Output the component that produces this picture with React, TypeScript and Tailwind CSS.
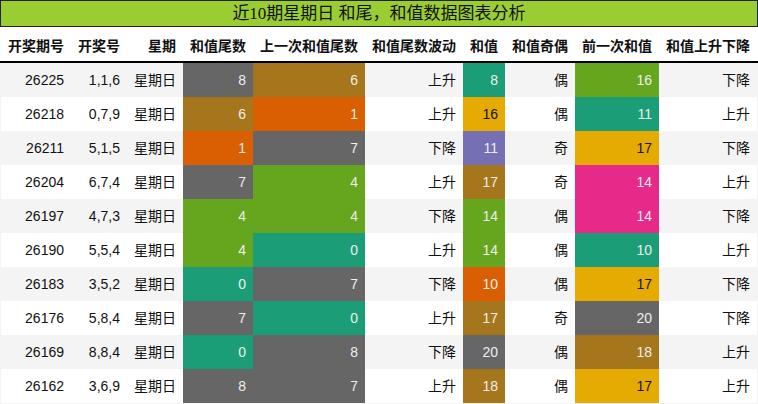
import React from "react";

type Cell = { v: string; c: string };

const G = "#666666";
const B = "#a6761d";
const O = "#d95f02";
const T = "#1b9e77";
const GR = "#66a61e";
const P = "#7570b3";
const Y = "#e6ab02";
const PK = "#e7298a";

const rows: [string, string, Cell, Cell, string, Cell, string, Cell, string][] = [
  ["26225", "1,1,6", { v: "8", c: G }, { v: "6", c: B }, "上升", { v: "8", c: T }, "偶", { v: "16", c: GR }, "下降"],
  ["26218", "0,7,9", { v: "6", c: B }, { v: "1", c: O }, "上升", { v: "16", c: Y }, "偶", { v: "11", c: T }, "上升"],
  ["26211", "5,1,5", { v: "1", c: O }, { v: "7", c: G }, "下降", { v: "11", c: P }, "奇", { v: "17", c: Y }, "下降"],
  ["26204", "6,7,4", { v: "7", c: G }, { v: "4", c: GR }, "上升", { v: "17", c: B }, "奇", { v: "14", c: PK }, "上升"],
  ["26197", "4,7,3", { v: "4", c: GR }, { v: "4", c: GR }, "下降", { v: "14", c: GR }, "偶", { v: "14", c: PK }, "下降"],
  ["26190", "5,5,4", { v: "4", c: GR }, { v: "0", c: T }, "上升", { v: "14", c: GR }, "偶", { v: "10", c: T }, "上升"],
  ["26183", "3,5,2", { v: "0", c: T }, { v: "7", c: G }, "下降", { v: "10", c: O }, "偶", { v: "17", c: Y }, "下降"],
  ["26176", "5,8,4", { v: "7", c: G }, { v: "0", c: T }, "上升", { v: "17", c: B }, "奇", { v: "20", c: G }, "下降"],
  ["26169", "8,8,4", { v: "0", c: T }, { v: "8", c: G }, "下降", { v: "20", c: G }, "偶", { v: "18", c: B }, "上升"],
  ["26162", "3,6,9", { v: "8", c: G }, { v: "7", c: G }, "上升", { v: "18", c: B }, "偶", { v: "17", c: Y }, "上升"],
];

const headers = ["开奖期号", "开奖号", "星期", "和值尾数", "上一次和值尾数", "和值尾数波动", "和值", "和值奇偶", "前一次和值", "和值上升下降"];

const gridCols = "grid grid-cols-[70px_56px_56px_70px_112px_98px_42px_70px_84px_98px]";

function Colored({ cell }: { cell: Cell }) {
  const dark = cell.c === Y;
  return (
    <div
      className={`flex items-center justify-end px-[7px] ${dark ? "text-[#111]" : "text-[#eeeeee]"}`}
      style={{ backgroundColor: cell.c }}
    >
      {cell.v}
    </div>
  );
}

function Plain({ children }: { children: React.ReactNode }) {
  return <div className="flex items-center justify-end px-[7px]">{children}</div>;
}

export default function App() {
  return (
    <div className="w-[758px] h-[404px] overflow-hidden bg-[#f4f4f4] text-[14px] text-[#111] font-['Liberation_Sans','Noto_Sans_CJK_SC',sans-serif]">
      <div className="h-[27px] border border-[#222] bg-[#9acd32] flex items-center justify-center text-[17px] text-[#111] font-['Liberation_Serif','Noto_Sans_CJK_SC',serif]">
        近10期星期日 和尾，和值数据图表分析
      </div>
      <div className="bg-white border-b-2 border-black px-px">
        <div className={`${gridCols} h-[34px] font-bold`}>
          {headers.map((h) => (
            <div key={h} className="flex items-center justify-end px-[7px] pt-[4px]">
              {h}
            </div>
          ))}
        </div>
      </div>
      <div className="px-px">
        {rows.map((r, i) => (
          <div key={r[0]} className={`${gridCols} h-[34px] ${i % 2 === 0 ? "bg-[#f4f4f4]" : "bg-white"}`}>
            <Plain>{r[0]}</Plain>
            <Plain>{r[1]}</Plain>
            <Plain>星期日</Plain>
            <Colored cell={r[2]} />
            <Colored cell={r[3]} />
            <Plain>{r[4]}</Plain>
            <Colored cell={r[5]} />
            <Plain>{r[6]}</Plain>
            <Colored cell={r[7]} />
            <Plain>{r[8]}</Plain>
          </div>
        ))}
      </div>
    </div>
  );
}
